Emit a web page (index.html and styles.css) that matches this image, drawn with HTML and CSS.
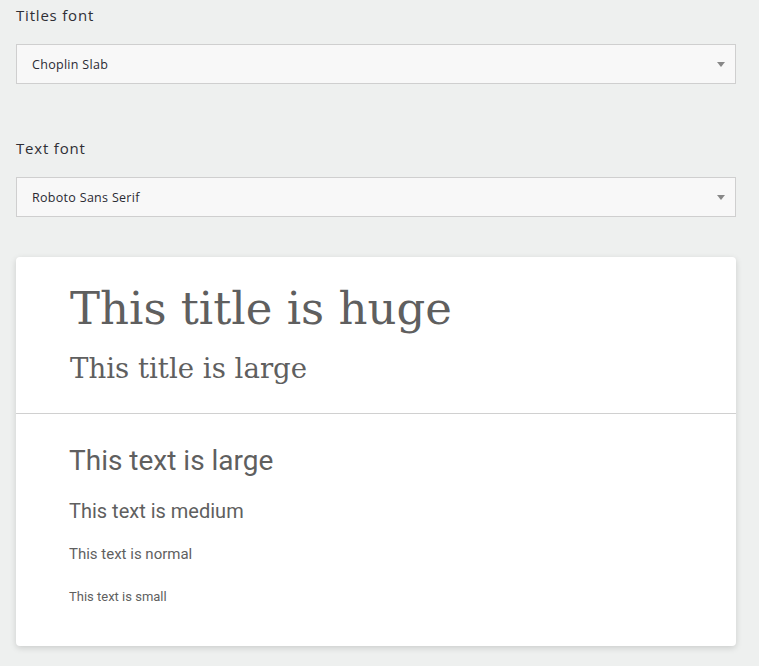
FILE: index.html
```html
<!DOCTYPE html>
<html>
<head>
<meta charset="utf-8">
<link rel="stylesheet" href="styles.css">
</head>
<body>
<div class="page">
  <div class="field">
    <label class="label">Titles font</label>
    <div class="select"><span>Choplin Slab</span><span class="caret"></span></div>
  </div>
  <div class="field">
    <label class="label">Text font</label>
    <div class="select"><span>Roboto Sans Serif</span><span class="caret"></span></div>
  </div>
  <div class="card">
    <div class="titles">
      <div class="t-huge">This title is huge</div>
      <div class="t-large">This title is large</div>
    </div>
    <div class="texts">
      <div class="x-large">This text is large</div>
      <div class="x-medium">This text is medium</div>
      <div class="x-normal">This text is normal</div>
      <div class="x-small">This text is small</div>
    </div>
  </div>
</div>
</body>
</html>
```

FILE: styles.css
```css
html, body { margin: 0; padding: 0; background: #eef0ef; }
body { font-family: "Open Sans", "Noto Sans", sans-serif; color: #333; }
.page { padding: 4px 23px 20px 16px; }
.field { margin-bottom: 40px; }
.field + .field { margin-top: 53px; }
.field:first-child { margin-bottom: 0; }
.label { display: block; font-size: 15px; font-weight: 500; line-height: 22px; color: #2f2f35; margin-bottom: 18px; letter-spacing: 0.8px; }
.select { height: 38px; border: 1px solid #cfcfcf; background: #f8f8f8; display: flex; align-items: center; justify-content: space-between; padding: 0 10px 0 15px; font-size: 12.5px; letter-spacing: 0.3px; color: #2a2a33; }
.caret { width: 0; height: 0; border-left: 4px solid transparent; border-right: 4px solid transparent; border-top: 5px solid #888; }
.card { background: #fff; border-radius: 4px; box-shadow: 0 2px 6px rgba(0,0,0,0.15); }
.titles { padding: 22px 54px 24px; border-bottom: 1px solid #d0d0d0; font-family: "DejaVu Serif", serif; color: #5f5f5f; }
.t-huge { font-size: 45px; line-height: 60px; }
.t-large { font-size: 27.6px; line-height: 40px; margin-top: 10px; }
.texts { padding: 29px 54px 40px 53px; font-family: Roboto, sans-serif; color: #5f5f5f; }
.x-large { font-size: 28px; line-height: 36px; }
.x-medium { font-size: 20px; line-height: 28px; margin-top: 18px; }
.x-normal { font-size: 15px; line-height: 22px; margin-top: 18px; }
.x-small { font-size: 13px; line-height: 18px; margin-top: 23px; }
```
